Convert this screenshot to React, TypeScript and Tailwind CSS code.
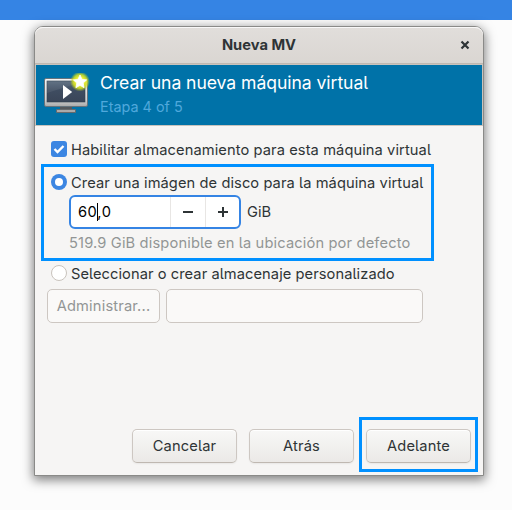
import type { ReactNode } from "react";

function VmIcon() {
  return (
    <svg width="48" height="48" viewBox="0 0 48 48" className="mt-1 shrink-0">
      <defs>
        <linearGradient id="frame" x1="0" y1="0" x2="0" y2="1">
          <stop offset="0" stopColor="#f4f4f4" />
          <stop offset="0.75" stopColor="#d2d2d2" />
          <stop offset="1" stopColor="#a9a9a9" />
        </linearGradient>
        <linearGradient id="screen" x1="0" y1="0" x2="0" y2="1">
          <stop offset="0" stopColor="#56687c" />
          <stop offset="0.45" stopColor="#3f4d61" />
          <stop offset="1" stopColor="#3a4558" />
        </linearGradient>
        <radialGradient id="glow">
          <stop offset="0.4" stopColor="#f2f53a" />
          <stop offset="0.7" stopColor="#d4e020" stopOpacity="0.85" />
          <stop offset="1" stopColor="#b8d020" stopOpacity="0" />
        </radialGradient>
      </defs>
      <path d="M18 33h12v4H18z" fill="#55585c" />
      <rect x="14.500" y="36.500" width="19" height="3" rx="0.500" fill="#aaa" stroke="#666a6c" />
      <rect x="2.500" y="5.500" width="43" height="28" rx="1.500" fill="url(#frame)" stroke="#66737c" />
      <rect x="5" y="8" width="38" height="21" fill="url(#screen)" stroke="#30404f" strokeWidth="0.600" />
      <path d="M5 8h38L5 20z" fill="#fff" opacity="0.07" />
      <path d="M21 12l9.200 7-9.200 7z" fill="#fff" />
      <circle cx="38" cy="8.500" r="10" fill="url(#glow)" />
      <path d="M38 2l2 4.400 4.600.5-3.400 3.100.9 4.700-4.100-2.400-4.100 2.400.9-4.700-3.400-3.100 4.600-.5z" fill="#fff" stroke="#fff" strokeWidth="0.800" strokeLinejoin="round" />
    </svg>
  );
}

function Radio({ checked = false }: { checked?: boolean }) {
  return checked ? (
    <span className="flex size-4 shrink-0 items-center justify-center rounded-full bg-[#3c86e2]">
      <span className="size-2 rounded-full bg-white" />
    </span>
  ) : (
    <span className="size-4 shrink-0 rounded-full border border-[#c9c3bd] bg-white" />
  );
}

function DialogButton({ children }: { children: ReactNode }) {
  return (
    <button className="flex h-[34px] w-[105px] items-center justify-center rounded-[5px] border border-[#cdc7c2] border-b-[#bfb8b1] bg-linear-to-b from-[#f8f8f7] to-[#ebe9e7] tracking-[0.15px] shadow-[inset_0_1px_0_#ffffff,0_1px_2px_rgba(0,0,0,0.06)]">
      {children}
    </button>
  );
}

export default function App() {
  return (
    <div className="h-[510px] w-[512px] overflow-hidden bg-[#fcfcfc] font-['Inter','Noto_Sans',sans-serif] text-[14.667px] leading-5 text-[#2e3436] [font-feature-settings:'cv05']">
      <div className="h-5 bg-[#3584e4]" />
      <main className="relative mt-1.5 ml-[34px] flex h-[450px] w-[450px] flex-col rounded-t-[9px] border border-[#8a8a88] bg-[#f6f5f4] shadow-[0_3px_11px_1px_rgba(0,0,0,0.5)]">
        <header className="grid h-[37px] shrink-0 grid-cols-[1fr_auto_1fr] items-center rounded-t-[8px] border-b border-[#bfb8b1] bg-linear-to-b from-[#e1dedb] to-[#dad6d2] shadow-[inset_0_1px_0_#f9f8f8]">
          <h1 className="col-start-2 text-[14.700px] font-bold">Nueva MV</h1>
          <svg width="10" height="10" viewBox="0 0 10 10" className="mr-[13px] justify-self-end">
            <path d="M1.500 1.500l7 7M8.500 1.500l-7 7" stroke="#2e3436" strokeWidth="2.200" />
          </svg>
        </header>

        <section className="flex h-[62px] shrink-0 border border-[#c8c3bd] bg-[#0072a8] pt-1 pl-[6px]">
          <VmIcon />
          <div className="ml-[10px] pt-[2px]">
            <h2 className="text-[17.600px] leading-6 tracking-[-0.060px] whitespace-nowrap text-white">Crear una nueva máquina virtual</h2>
            <p className="text-[14.400px] leading-6 text-[#4fa8dc]">Etapa 4 of 5</p>
          </div>
        </section>

        <section className="flex flex-col pt-[13px] pl-4 whitespace-nowrap">
          <label className="flex h-5 items-center gap-1">
            <span className="flex size-4 shrink-0 items-center justify-center rounded-[3px] bg-[#3c86e2]">
              <svg width="12" height="12" viewBox="0 0 12 12">
                <path d="M1.500 6l3 3 6-6" fill="none" stroke="#fff" strokeWidth="2.400" />
              </svg>
            </span>
            <span className="pt-0.5 tracking-[0.090px]">Habilitar almacenamiento para esta máquina virtual</span>
          </label>
          <label className="mt-[13px] flex h-5 items-center gap-1">
            <Radio checked />
            <span className="pt-0.5 tracking-[0.080px]">Crear una imágen de disco para la máquina virtual</span>
          </label>
          <div className="mt-[3px] ml-[18px] flex items-center gap-[6px]">
            <div className="flex h-[34px] w-[172px] rounded-[6px] border-2 border-[#3584e4] bg-white text-black">
              <div className="flex w-[99px] items-center pl-[7px] tracking-[0.500px]">
                <span>60</span>
                <span className="h-[18px] w-px bg-black" />
                <span className="-ml-px">,0</span>
              </div>
              <div className="flex w-[35px] items-center justify-center border-l border-[#e8e6e4]">
                <span className="h-[2px] w-[10px] bg-[#2e3436]" />
              </div>
              <div className="flex flex-1 items-center justify-center border-l border-[#e8e6e4]">
                <svg width="10" height="10" viewBox="0 0 10 10">
                  <path d="M0 5h10M5 0v10" stroke="#2e3436" strokeWidth="2" />
                </svg>
              </div>
            </div>
            <span>GiB</span>
          </div>
          <p className="mt-[4px] ml-[18px] tracking-[0.150px] text-[#929595]">519.9 GiB disponible en la ubicación por defecto</p>
          <label className="mt-[10px] flex h-5 items-center gap-1">
            <Radio />
            <span className="pt-0.5 tracking-[0.070px]">Seleccionar o crear almacenaje personalizado</span>
          </label>
          <div className="mt-[6px] -ml-1 flex gap-[6px]">
            <button disabled className="h-[34px] w-[113px] rounded-[5px] border border-[#cdc7c2] bg-[#faf9f8] tracking-[0.170px] text-[#929595]">
              Administrar...
            </button>
            <div className="h-[34px] w-[257px] rounded-[5px] border border-[#cdc7c2] bg-[#faf9f8]" />
          </div>
        </section>

        <footer className="mt-auto mr-3 mb-3 flex justify-end gap-3">
          <DialogButton>Cancelar</DialogButton>
          <DialogButton>Atrás</DialogButton>
          <DialogButton>Adelante</DialogButton>
        </footer>

        <div className="pointer-events-none absolute top-[137px] left-[6px] h-[97px] w-[393px] border-3 border-[#0090ff]" />
        <div className="pointer-events-none absolute top-[390px] left-[324px] h-[55px] w-[119px] border-3 border-[#0090ff]" />
      </main>
    </div>
  );
}
